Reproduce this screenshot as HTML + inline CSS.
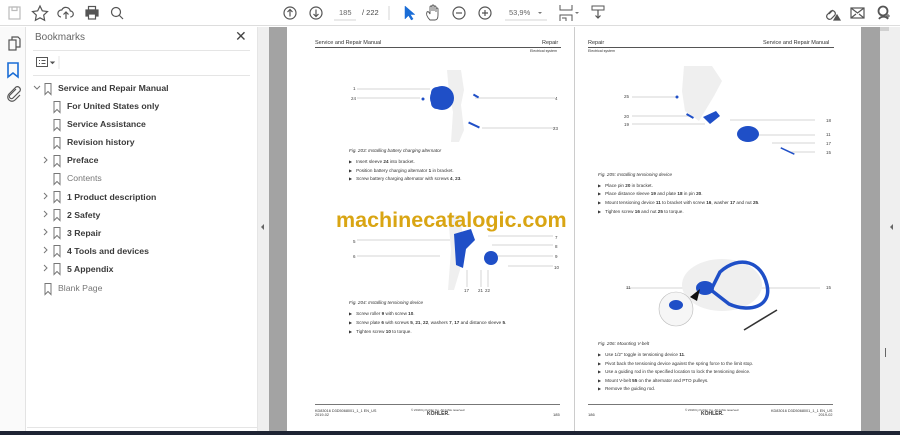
<!DOCTYPE html>
<html><head><meta charset="utf-8"><style>
*{margin:0;padding:0;box-sizing:border-box}
body{width:900px;height:435px;overflow:hidden;background:#fff;font-family:"Liberation Sans",sans-serif;position:relative}
.a{position:absolute}
.tb{left:0;top:0;width:900px;height:26px;background:#fff;border-bottom:1px solid #ddd}
.bm{position:absolute;font-size:8.7px;font-weight:bold;color:#3a3a3a;white-space:nowrap}
.bm.l{font-weight:normal;color:#777}
.pt{position:absolute;font-size:4.6px;color:#333;white-space:nowrap}
.cap{font-style:italic}
.bul:before{content:"\25B6";font-size:4px;margin-right:4px}
</style></head><body>
<div class="a tb"></div>
<svg class="a" style="left:0;top:0" width="900" height="26" fill="none" stroke="#555" stroke-width="1.2">
 <rect x="9" y="7" width="11" height="12" stroke="#bbb"/><rect x="12" y="7" width="5" height="3.5" stroke="#bbb"/>
 <path d="M40 6 l2.3 4.8 5.2.7-3.8 3.6.9 5.2-4.6-2.5-4.6 2.5.9-5.2-3.8-3.6 5.2-.7z"/>
 <path d="M61 17 a3.5 3.5 0 0 1 .8-7 a4.5 4.5 0 0 1 8.5 1 a3 3 0 0 1 0 6 M66 19 v-7 m-2.5 2.5 l2.5-2.5 2.5 2.5"/>
 <rect x="86" y="10" width="12" height="6" fill="#555"/><rect x="88.5" y="6.5" width="7" height="3.5"/><rect x="88.5" y="14" width="7" height="5" fill="#fff"/>
 <circle cx="116" cy="12" r="4.5"/><path d="M119.5 15.5 l3.5 3.5"/>
 <circle cx="290" cy="13" r="6"/><path d="M290 16.5 v-7 m-2.5 2.5 l2.5-2.5 2.5 2.5"/>
 <circle cx="316" cy="13" r="6"/><path d="M316 9.5 v7 m-2.5-2.5 l2.5 2.5 2.5-2.5"/>
 <path d="M334 20 h22" stroke="#ddd"/>
 <path d="M389 6 v14" stroke="#ddd"/>
 <path d="M405 6 l0 13 3.5-3.5 2.8 4.5 1.8-1-2.8-4.5 4.5 0z" fill="#1a6dd6" stroke="#1a6dd6" stroke-width="0.5"/>
 <path d="M430 20 c-3-3-4-6-3-8 c1-1 2 0 3 2 v-7 a1 1 0 0 1 2 0 v4 v-5 a1 1 0 0 1 2 0 v5 v-4 a1 1 0 0 1 2 0 v5 v-3 a1 1 0 0 1 2 0 v6 c0 3-1 5-3 5z" stroke-width="0.9"/>
 <circle cx="459" cy="13" r="6"/><path d="M456 13h6"/>
 <circle cx="485" cy="13" r="6"/><path d="M482 13h6 M485 10v6"/>
 <path d="M505 20 h42" stroke="#ddd"/><path d="M538 12 l2 2 2-2z" fill="#777" stroke="none"/>
 <path d="M560 5 v5 h12 v-5 M560 21 v-6 h12 v6 M562 18 h4 v3" stroke-width="1"/><path d="M575 12 l2 2 2-2z" fill="#777" stroke="none"/>
 <rect x="592" y="6" width="12" height="4" stroke-width="1"/><path d="M598 10 v8 m-2.5-2.5 l2.5 2.5 2.5-2.5"/>
 <path d="M831 11 a3 3 0 0 1 4 4 l-4 4 a3 3 0 0 1-4-4z M829 14 l4-4"/><path d="M834 20 l3-5 3 5z" fill="#555"/>
 <rect x="851" y="8" width="13" height="10"/><path d="M851 8 l6.5 5 6.5-5 M851 18 l5-4 M864 18 l-5-4"/>
 <circle cx="883" cy="11" r="4.5" stroke-width="1.8"/><path d="M879 19 a5 4 0 0 1 9 0" stroke-width="1.8"/><path d="M886 16 h4 M888 14 v4" stroke-width="1"/>
</svg>
<div class="a" style="left:339px;top:8px;font-size:7.5px;color:#666">185</div>
<div class="a" style="left:362px;top:8px;font-size:7.5px;color:#444">/ 222</div>
<div class="a" style="left:509px;top:8px;font-size:7.5px;color:#666">53,9%</div>

<div class="a" style="left:0;top:27px;width:26px;height:404px;background:#fafafa;border-right:1px solid #e3e3e3"></div>
<svg class="a" style="left:0;top:27px" width="26" height="90" fill="none" stroke="#555" stroke-width="1.2">
 <rect x="9" y="13" width="7" height="10"/><path d="M12 13 v-3 h6 l2 2 v8 h-4"/>
 <path d="M8 36 h10 v14 l-5-4 -5 4z" stroke="#1a6dd6" stroke-width="1.6"/>
 <path d="M16 62 l-6 6 a2 2 0 0 0 3 3 l7-7 a3 3 0 0 0-4-4 l-7 7 a4 4 0 0 0 6 6 l5-5"/>
</svg>
<div class="a" style="left:27px;top:27px;width:231px;height:404px;background:#fff;border-right:1px solid #e5e5e5"></div>
<div class="a" style="left:35px;top:32px;font-size:10px;color:#666">Bookmarks</div>
<div class="a" style="left:235px;top:28px;font-size:14px;color:#444">✕</div>
<div class="a" style="left:33px;top:50px;width:217px;height:1px;background:#e5e5e5"></div>
<svg class="a" style="left:35px;top:56px" width="30" height="14" fill="none" stroke="#555" stroke-width="1">
 <rect x="1.5" y="1.5" width="11" height="9"/><path d="M4 4.5h1 M6.5 4.5h4 M4 7.5h1 M6.5 7.5h4"/><path d="M16 6 l1.5 1.5 1.5-1.5z" fill="#555"/><path d="M24 0 v13" stroke="#e5e5e5"/>
</svg>
<div class="a" style="left:33px;top:75px;width:217px;height:1px;background:#e5e5e5"></div>
<svg class="a" style="left:27px;top:80px" width="60" height="220" fill="none" stroke="#777" stroke-width="1">
 <path d="M7 6 l3 3 3-3"/>
 <path d="M18 3.5 h6 v11 l-3-3 -3 3z"/>
 <g id="b"><path d="M27 21.5 h6 v11 l-3-3 -3 3z"/></g>
 <use href="#b" y="18"/><use href="#b" y="36"/><use href="#b" y="54"/><use href="#b" y="72"/><use href="#b" y="90"/><use href="#b" y="108"/><use href="#b" y="126"/><use href="#b" y="144"/><use href="#b" y="162"/>
 <path d="M18 203.5 h6 v11 l-3-3 -3 3z"/>
 <path d="M17 77 l3 3 -3 3 M17 113 l3 3-3 3 M17 131 l3 3-3 3 M17 149 l3 3-3 3 M17 167 l3 3-3 3 M17 185 l3 3-3 3"/>
</svg>
<div class="bm" style="left:58px;top:83px">Service and Repair Manual</div>
<div class="bm" style="left:67px;top:101px">For United States only</div>
<div class="bm" style="left:67px;top:119px">Service Assistance</div>
<div class="bm" style="left:67px;top:137px">Revision history</div>
<div class="bm" style="left:67px;top:155px">Preface</div>
<div class="bm l" style="left:67px;top:173px">Contents</div>
<div class="bm" style="left:67px;top:192px">1 Product description</div>
<div class="bm" style="left:67px;top:210px">2 Safety</div>
<div class="bm" style="left:67px;top:228px">3 Repair</div>
<div class="bm" style="left:67px;top:246px">4 Tools and devices</div>
<div class="bm" style="left:67px;top:264px">5 Appendix</div>
<div class="bm l" style="left:58px;top:283px">Blank Page</div>
<div class="a" style="left:27px;top:427px;width:231px;height:1px;background:#e5e5e5"></div>
<div class="a" style="left:258px;top:27px;width:11px;height:404px;background:#efefef"></div>
<div class="a" style="left:261px;top:224px;width:0;height:0;border-top:3px solid transparent;border-bottom:3px solid transparent;border-right:3px solid #666"></div>
<div class="a" style="left:269px;top:27px;width:611px;height:404px;background:#a3a3a3"></div>
<div class="a" style="left:287px;top:27px;width:574px;height:404px;background:#fff"></div>
<div class="a" style="left:574px;top:27px;width:1px;height:404px;background:#ccc"></div>
<div class="a" style="left:880px;top:27px;width:20px;height:404px;background:#efefef"></div>
<div class="a" style="left:880px;top:27px;width:9px;height:4px;background:#d0d0d0"></div>
<div class="a" style="left:885px;top:348px;width:1px;height:9px;background:#666"></div>
<div class="a" style="left:890px;top:224px;width:0;height:0;border-top:3px solid transparent;border-bottom:3px solid transparent;border-right:3px solid #666"></div>
<div class="a" style="left:0;top:431px;width:900px;height:4px;background:#1e2433"></div>

<div class="pt" style="left:315px;top:40px;font-size:5.5px">Service and Repair Manual</div>
<div class="pt" style="left:542px;top:40px;font-size:5.5px">Repair</div>
<div class="a" style="left:315px;top:47px;width:246px;height:1px;background:#555"></div>
<div class="pt" style="left:530px;top:49px;font-size:3.6px">Electrical system</div>
<div class="pt" style="left:588px;top:40px;font-size:5.5px">Repair</div>
<div class="pt" style="left:763px;top:40px;font-size:5.5px">Service and Repair Manual</div>
<div class="a" style="left:588px;top:47px;width:246px;height:1px;background:#555"></div>
<div class="pt" style="left:588px;top:49px;font-size:3.6px">Electrical system</div>

<svg class="a" style="left:0;top:0" width="900" height="435">
 <g stroke="#aaa" stroke-width="0.5">
  <path d="M357 89 H430 M357 98 H420 M475 98 H555 M482 128 H555"/>
  <path d="M357 240 H450 M357 256 H440 M488 236 H553 M492 245 H553 M490 256 H553 M508 266 H553 M467 270 V287 M481 270 V287 M488 270 V287"/>
  <path d="M632 97 H676 M632 116 H690 M632 124 H705 M730 120 H815 M755 135 H815 M772 143 H815 M790 152 H815"/>
  <path d="M626 288 H690 M760 288 H820"/>
 </g>
 <g fill="#efefef"><path d="M447 70 h14 l3 20 -3 15 3 25 -5 12 h-8 l2-30 -4-20z"/><path d="M448 215 h12 l4 30 -4 25 -6 20 h-6 l3-40 z"/>
  <path d="M684 66 h28 l10 15 -8 15 -15 25 -14 -10 -3 -20z"/><ellipse cx="722" cy="285" rx="40" ry="26"/></g>
 <g fill="#1f4fc7">
  <ellipse cx="442" cy="98" rx="12" ry="12"/><rect x="431" y="87" width="20" height="22" rx="6"/>
  <rect x="473" y="95" width="6" height="2" transform="rotate(30 476 96)"/><rect x="468" y="124" width="12" height="2" transform="rotate(25 474 125)"/>
  <circle cx="423" cy="99" r="1.5"/>
  <path d="M454 234 l17 -5 l4 11 l-9 9 l-3 19 l-7 -3 z"/>
  <ellipse cx="491" cy="258" rx="7" ry="7"/>
  <path d="M703 117 l13-6 4 5 -10 8z"/><ellipse cx="748" cy="134" rx="11" ry="8"/>
  <circle cx="677" cy="97" r="1.5"/><rect x="686" y="115" width="8" height="2" transform="rotate(30 690 116)"/>
  <rect x="780" y="150" width="15" height="1.5" transform="rotate(25 787 151)"/>
  <ellipse cx="705" cy="288" rx="9" ry="7"/>
 </g>
 <path d="M720 272 c20-18 42-10 47 13 c5 22-18 28-38 19 l-18-14z" fill="none" stroke="#1f4fc7" stroke-width="3.5"/>
 <circle cx="676" cy="309" r="17" fill="#f6f6f6" stroke="#bbb" stroke-width="0.6"/>
 <ellipse cx="676" cy="305" rx="7" ry="5" fill="#1f4fc7"/>
 <path d="M744 330 l33-20" stroke="#333" stroke-width="1.6"/>
 <path d="M690 297 l10 -8 -3 12z" fill="#111"/>
 <g font-family="Liberation Sans" font-size="4.5" fill="#444">
  <text x="353" y="90">1</text><text x="351" y="100">24</text><text x="555" y="100">4</text><text x="553" y="130">23</text>
  <text x="353" y="243">5</text><text x="353" y="258">6</text><text x="555" y="239">7</text><text x="555" y="248">8</text><text x="555" y="258">9</text><text x="554" y="269">10</text>
  <text x="464" y="292">17</text><text x="478" y="292">21</text><text x="485" y="292">22</text>
  <text x="624" y="98">25</text><text x="624" y="118">20</text><text x="624" y="126">19</text><text x="826" y="122">18</text><text x="826" y="136">11</text><text x="826" y="145">17</text><text x="826" y="154">15</text>
  <text x="626" y="289">11</text><text x="826" y="289">15</text>
 </g>
</svg>

<div class="a" style="left:336px;top:208px;font-size:21.5px;font-weight:bold;color:#d9a513;white-space:nowrap">machinecatalogic.com</div>

<div class="pt cap" style="left:349px;top:148px">Fig. 203: Installing battery charging alternator</div>
<div class="pt bul" style="left:349px;top:159px">Insert sleeve <b>24</b> into bracket.</div>
<div class="pt bul" style="left:349px;top:168px">Position battery charging alternator <b>1</b> in bracket.</div>
<div class="pt bul" style="left:349px;top:176px">Screw battery charging alternator with screws <b>4</b>, <b>23</b>.</div>
<div class="pt cap" style="left:349px;top:300px">Fig. 204: Installing tensioning device</div>
<div class="pt bul" style="left:349px;top:311px">Screw roller <b>9</b> with screw <b>10</b>.</div>
<div class="pt bul" style="left:349px;top:320px">Screw plate <b>6</b> with screws <b>5</b>, <b>21</b>, <b>22</b>, washers <b>7</b>, <b>17</b> and distance sleeve <b>5</b>.</div>
<div class="pt bul" style="left:349px;top:329px">Tighten screw <b>10</b> to torque.</div>
<div class="pt cap" style="left:598px;top:172px">Fig. 205: Installing tensioning device</div>
<div class="pt bul" style="left:598px;top:183px">Place pin <b>20</b> in bracket.</div>
<div class="pt bul" style="left:598px;top:191px">Place distance sleeve <b>19</b> and plate <b>18</b> in pin <b>20</b>.</div>
<div class="pt bul" style="left:598px;top:200px">Mount tensioning device <b>11</b> to bracket with screw <b>16</b>, washer <b>17</b> and nut <b>25</b>.</div>
<div class="pt bul" style="left:598px;top:209px">Tighten screw <b>16</b> and nut <b>25</b> to torque.</div>
<div class="pt cap" style="left:598px;top:341px">Fig. 206: Mounting V-belt</div>
<div class="pt bul" style="left:598px;top:352px">Use 1/2" toggle in tensioning device <b>11</b>.</div>
<div class="pt bul" style="left:598px;top:361px">Pivot back the tensioning device against the spring force to the limit stop.</div>
<div class="pt bul" style="left:598px;top:369px">Use a guiding rod in the specified location to lock the tensioning device.</div>
<div class="pt bul" style="left:598px;top:378px">Mount V-belt <b>55</b> on the alternator and PTO pulleys.</div>
<div class="pt bul" style="left:598px;top:386px">Remove the guiding rod.</div>
<div class="a" style="left:315px;top:404px;width:245px;height:1px;background:#777"></div>
<div class="a" style="left:588px;top:404px;width:245px;height:1px;background:#777"></div>
<div class="pt" style="left:315px;top:409px;font-size:3.8px">KD83016 D3D5068001_1_1 EN_US<br>2019-02</div>
<div class="pt" style="left:411px;top:408px;font-size:3px">© 2019 by Kohler Co. All rights reserved</div>
<div class="pt" style="left:427px;top:411px;font-size:5px;font-weight:bold">KOHLER.</div>
<div class="pt" style="left:553px;top:412px;font-size:4px">185</div>
<div class="pt" style="left:588px;top:412px;font-size:4px">186</div>
<div class="pt" style="left:685px;top:408px;font-size:3px">© 2019 by Kohler Co. All rights reserved</div>
<div class="pt" style="left:701px;top:411px;font-size:5px;font-weight:bold">KOHLER.</div>
<div class="pt" style="left:771px;top:409px;font-size:3.8px;text-align:right">KD83016 D3D5068001_1_1 EN_US<br>2019-02</div>
</body></html>
